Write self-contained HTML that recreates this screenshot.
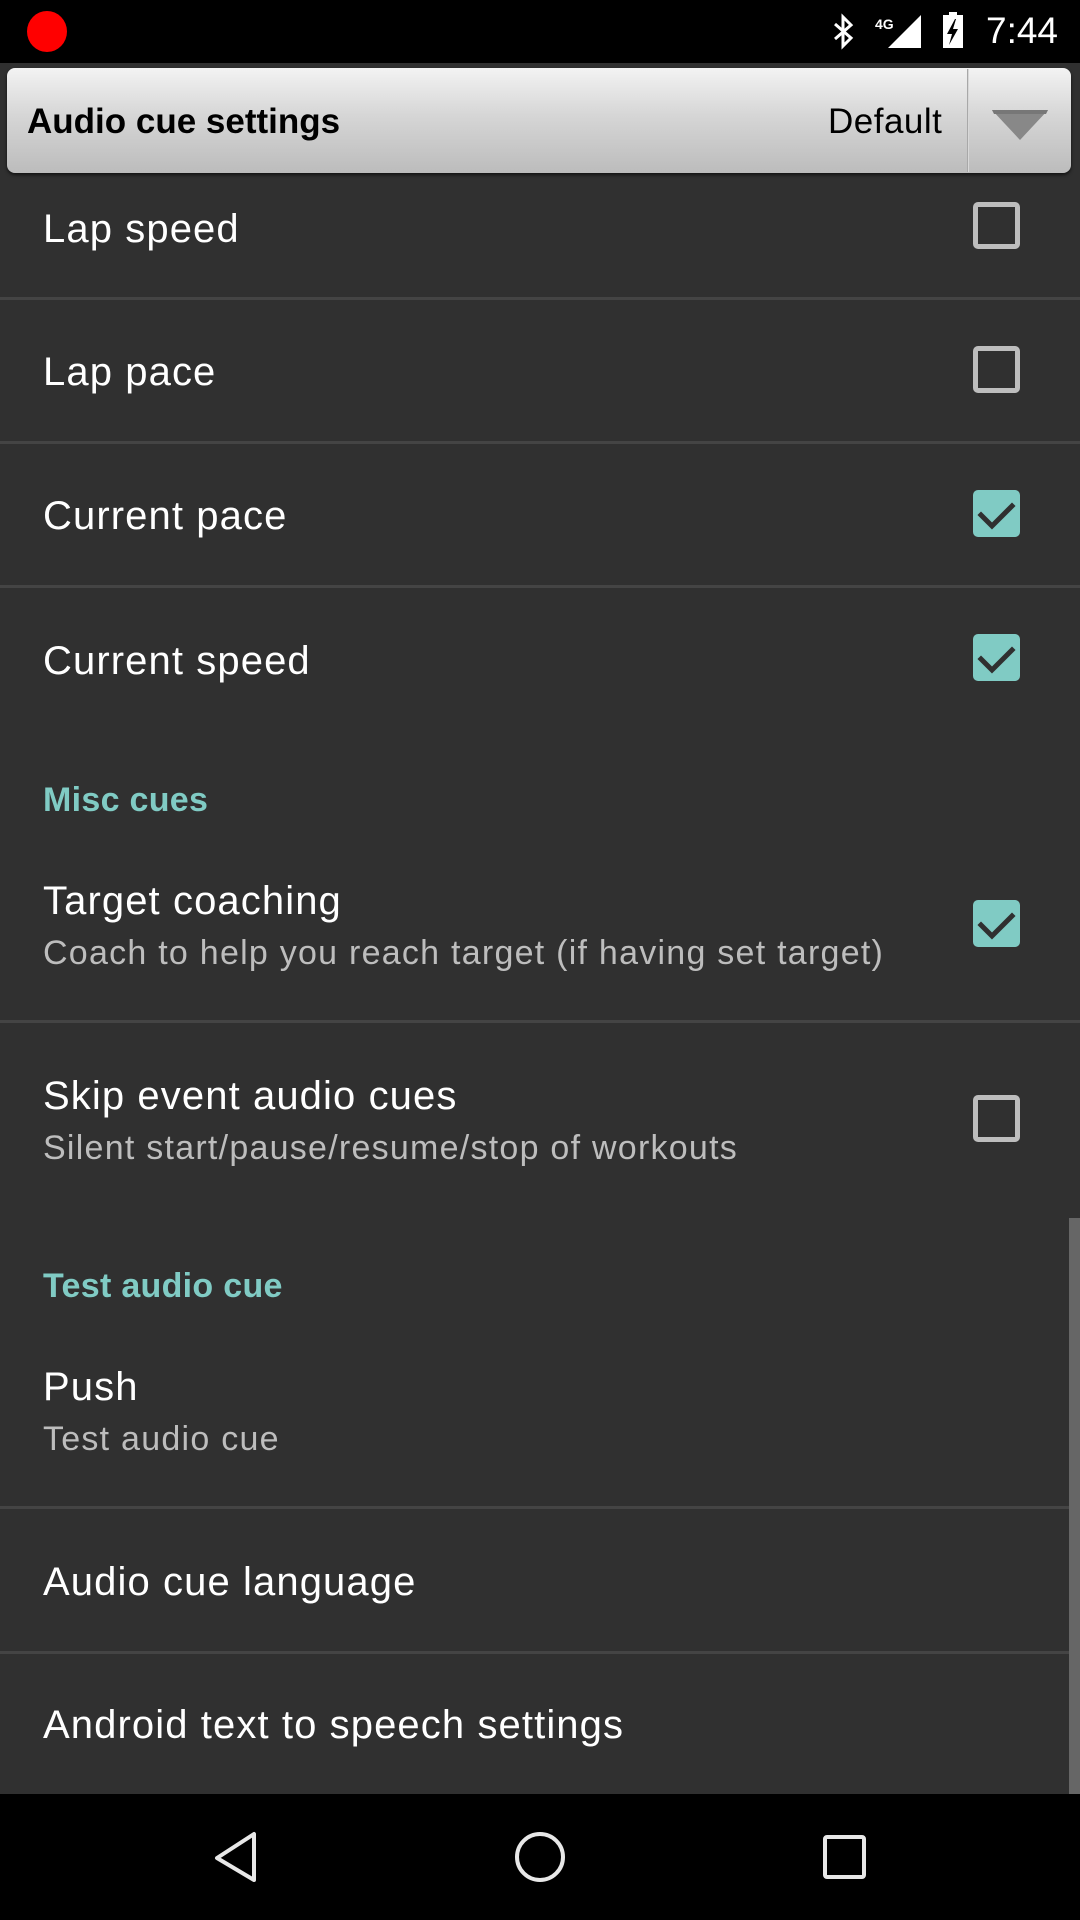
<!DOCTYPE html>
<html><head><meta charset="utf-8"><style>
*{margin:0;padding:0;box-sizing:border-box}
body{width:1080px;height:1920px;background:#303030;position:relative;overflow:hidden;font-family:"Liberation Sans",sans-serif}
.a{position:absolute}
.t{position:absolute;left:43px;color:#fff;font-size:40px;line-height:48px;white-space:nowrap;letter-spacing:1.1px}
.s{position:absolute;left:43px;color:#bdbdbd;font-size:34px;line-height:40px;white-space:nowrap;letter-spacing:1.25px}
.h{position:absolute;left:43px;color:#80cbc4;font-size:34px;font-weight:bold;line-height:40px;letter-spacing:0.3px}
.d{position:absolute;left:0;width:1080px;height:3px;background:#444}
.cb{position:absolute;left:973px;width:47px;height:47px;border:5px solid #bdbdbd;border-radius:5px}
.ck{position:absolute;left:973px;width:47px;height:47px;background:#80cbc4;border-radius:5px}
</style></head><body>
<div class="a" style="left:0;top:0;width:1080px;height:63px;background:#000"></div>
<div class="a" style="left:27px;top:11px;width:40px;height:41px;border-radius:50%;background:#f00"></div>
<svg class="a" style="left:830px;top:12px" width="140" height="40" viewBox="0 0 140 40">
<path d="M5 12 L21 26 L13 34 L13 5 L21 13 L5 27" fill="none" stroke="#fff" stroke-width="3"/>
<text x="45" y="17" fill="#fff" font-family="Liberation Sans" font-weight="bold" font-size="14">4G</text>
<polygon points="91,3 91,36 58,36" fill="#fff"/>
<rect x="113" y="3" width="20" height="33" fill="#fff"/>
<rect x="119" y="0" width="8" height="3" fill="#fff"/>
<polygon points="125,7 117,22 122,22 119,33 128,17 123,17 126,7" fill="#000"/>
</svg>
<div class="a" style="left:986px;top:9px;color:#fff;font-size:37px;line-height:44px">7:44</div>
<div class="a" style="left:7px;top:68px;width:1064px;height:105px;border-radius:8px;background:linear-gradient(#f3f3f3,#d6d6d6 45%,#bcbcbc);box-shadow:0 2px 3px rgba(0,0,0,.6)"></div>
<div class="a" style="left:967px;top:69px;width:2px;height:103px;background:#d8d8d8;border-left:1px solid #a8a8a8"></div>
<div class="a" style="left:27px;top:100px;font-size:35px;font-weight:bold;color:#000;line-height:44px">Audio cue settings</div>
<div class="a" style="left:828px;top:100px;font-size:35px;color:#000;line-height:44px;letter-spacing:0.5px">Default</div>
<svg class="a" style="left:990px;top:108px" width="60" height="34"><polygon points="2,2 58,2 30,32" fill="#888"/><polygon points="2,2 58,2 56,6 4,6" fill="#777"/></svg>

<div class="t" style="top:205px">Lap speed</div><div class="cb" style="top:202px"></div>
<div class="d" style="top:297px"></div>
<div class="t" style="top:348px">Lap pace</div><div class="cb" style="top:346px"></div>
<div class="d" style="top:441px"></div>
<div class="t" style="top:492px">Current pace</div><div class="ck" style="top:490px"></div>
<div class="d" style="top:585px"></div>
<div class="t" style="top:637px">Current speed</div><div class="ck" style="top:634px"></div>
<div class="h" style="top:780px">Misc cues</div>
<div class="t" style="top:877px">Target coaching</div>
<div class="s" style="top:933px">Coach to help you reach target (if having set target)</div>
<div class="ck" style="top:900px"></div>
<div class="d" style="top:1020px"></div>
<div class="t" style="top:1072px">Skip event audio cues</div>
<div class="s" style="top:1128px">Silent start/pause/resume/stop of workouts</div>
<div class="cb" style="top:1095px"></div>
<div class="h" style="top:1266px">Test audio cue</div>
<div class="t" style="top:1363px">Push</div>
<div class="s" style="top:1419px">Test audio cue</div>
<div class="d" style="top:1506px"></div>
<div class="t" style="top:1558px">Audio cue language</div>
<div class="d" style="top:1651px"></div>
<div class="t" style="top:1701px">Android text to speech settings</div>
<div class="a" style="left:1069px;top:1218px;width:11px;height:576px;background:#666"></div>

<svg class="a" style="left:0;top:0;pointer-events:none" width="1080" height="1920">
<g fill="none" stroke="#303030" stroke-width="5" stroke-linecap="square">
<path d="M981 515 L992 526 L1012 506"/>
<path d="M981 659 L992 670 L1012 650"/>
<path d="M981 925 L992 936 L1012 916"/>
</g>
<rect x="0" y="1794" width="1080" height="126" fill="#000"/>
<g fill="none" stroke="#e8e8e8" stroke-width="4" stroke-linejoin="round">
<path d="M254 1834 L254 1880 L217 1858 Z"/>
<circle cx="540" cy="1857" r="23"/>
<rect x="825" y="1837" width="39" height="40" rx="2"/>
</g>
</svg>
</body></html>
